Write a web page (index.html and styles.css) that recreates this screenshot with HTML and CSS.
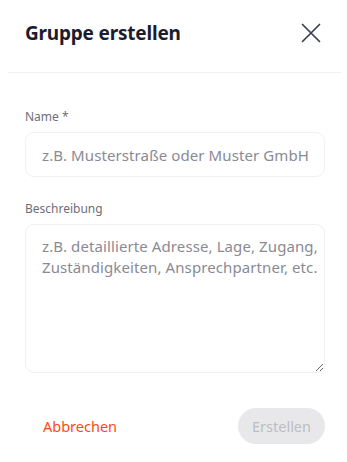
FILE: index.html
```html
<html lang="de">
<head>
    <meta charset="UTF-8">
    <meta name="viewport" content="width=device-width, initial-scale=1.0">
    <title>Gruppe erstellen</title>
    <link rel="stylesheet" href="styles.css">
</head>
<body>
    <div class="modal">
        <div class="header">
            <h2 class="title">Gruppe erstellen</h2>
            <button class="close" aria-label="Schließen">
                <svg width="20" height="20" viewBox="0 0 20 20">
                    <path d="M1.5 1.5 L18.5 18.5 M18.5 1.5 L1.5 18.5" stroke="#3b3b52" stroke-width="1.7" stroke-linecap="round" fill="none"/>
                </svg>
            </button>
        </div>

        <form class="form" autocomplete="off">
            <div class="field">
                <label for="name">Name *</label>
                <input type="text" id="name" placeholder="z.B. Musterstraße oder Muster GmbH">
            </div>
            <div class="field">
                <label for="desc">Beschreibung</label>
                <textarea id="desc" placeholder="z.B. detaillierte Adresse, Lage, Zugang, Zuständigkeiten, Ansprechpartner, etc."></textarea>
            </div>

            <div class="actions">
                <button type="button" class="cancel">Abbrechen</button>
                <button type="submit" class="submit" disabled>Erstellen</button>
            </div>
        </form>
    </div>
</body>
</html>
```

FILE: styles.css
```css
body{
    margin: 0;
    background: #fff;
    font-family: "Noto Sans", "Open Sans", sans-serif;
}
.modal{
    width: 347px;
}
.header{
    height: 73px;
    box-sizing: border-box;
    display: flex;
    align-items: center;
    justify-content: space-between;
    padding: 0 21px 6px 17px;
    margin: 0 5px 0 8px;
    border-bottom: 1px solid #f0f0f2;
}
.title{
    margin: 0;
    font-size: 19px;
    font-weight: 700;
    color: #1c1c2e;
    letter-spacing: -0.2px;
}
.close{
    border: none;
    background: none;
    padding: 0;
    width: 20px;
    height: 20px;
    cursor: pointer;
}
.form{
    padding: 36px 22px 0 25px;
}
.field{
    display: flex;
    flex-direction: column;
    margin-bottom: 24px;
}
label{
    font-size: 12px;
    color: #6e6e78;
    margin-bottom: 7px;
    line-height: 16px;
}
input, textarea{
    box-sizing: border-box;
    width: 300px;
    border: 1px solid #f0f0f2;
    border-radius: 9px;
    padding: 0 6px 0 16px;
    font-family: inherit;
    font-size: 15px;
    letter-spacing: 0.1px;
    color: #333;
    outline: none;
}
input{
    height: 45px;
}
textarea{
    height: 149px;
    padding: 11px 4px 10px 16px;
    line-height: 21px;
    resize: vertical;
}
input::placeholder, textarea::placeholder{
    color: #8a8a94;
}
.actions{
    display: flex;
    justify-content: space-between;
    align-items: center;
    margin-top: 35px;
}
.cancel{
    border: none;
    background: none;
    padding: 0 0 0 18px;
    font-family: inherit;
    font-size: 14.5px;
    color: #ff4a17;
    cursor: pointer;
}
.submit{
    border: none;
    width: 87px;
    height: 36px;
    border-radius: 18px;
    background: #e8e8ea;
    color: #bdbdc2;
    font-family: inherit;
    font-size: 14.5px;
}
```
